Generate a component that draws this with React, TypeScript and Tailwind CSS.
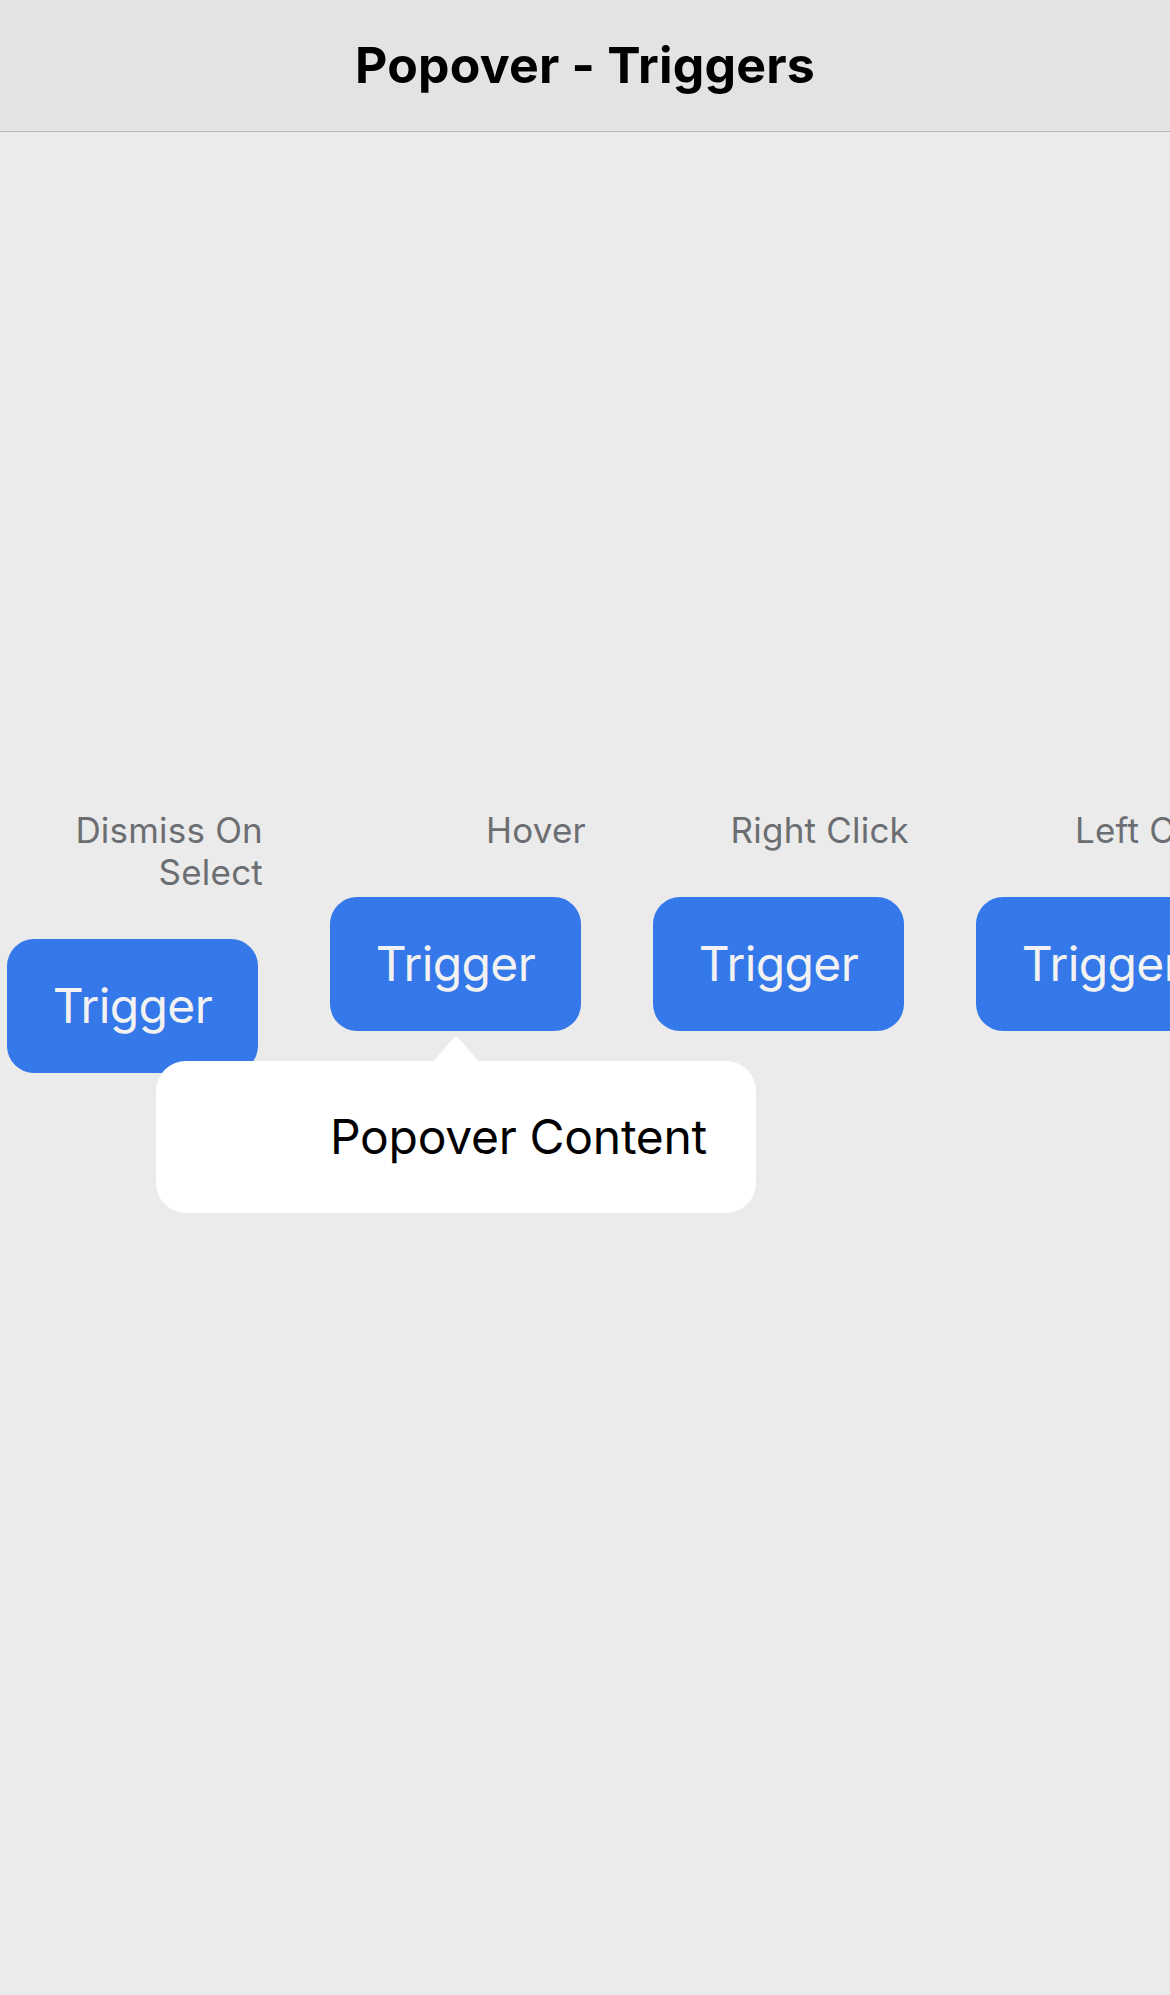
const columns = [
  { label: "Dismiss On Select" },
  { label: "Hover" },
  { label: "Right Click" },
  { label: "Left Click" },
];

function TriggerColumn({ label }: { label: string }) {
  return (
    <div className="flex w-[256px] flex-shrink-0 flex-col items-start">
      <p className="w-full text-right text-[35px] leading-[42px] tracking-[0.2px] text-[#6c6e72]">{label}</p>
      <button className="mt-[46px] flex h-[134px] w-[251px] items-center justify-center rounded-[27px] bg-[#3578e9] text-[48px] tracking-[-0.6px] text-[#f2f2f2]">
        Trigger
      </button>
    </div>
  );
}

export default function App() {
  return (
    <div className="relative min-h-[1995px] w-[1170px] overflow-hidden bg-[#ebebeb] font-['Inter',sans-serif]">
      <header className="flex h-[132px] items-center justify-center border-b border-[#b6b6b6] bg-[#e3e3e3]">
        <h1 className="text-[50px] font-bold tracking-[0.2px] text-black">Popover - Triggers</h1>
      </header>

      <div className="flex gap-[67px] pl-[7px] pt-[677px]">
        {columns.map((c) => (
          <TriggerColumn key={c.label} label={c.label} />
        ))}
      </div>

      {/* popover shown under the hover trigger */}
      <div className="absolute left-[156px] top-[1035px] w-[600px]">
        <svg width="52" height="27" viewBox="0 0 52 27" className="ml-[274px] block">
          <path d="M0 27 Q3 27 5 24.5 L23 3.5 Q26 0 29 3.5 L47 24.5 Q49 27 52 27 Z" fill="#ffffff" />
        </svg>
        <div className="-mt-px flex h-[152px] items-center justify-end rounded-[30px] bg-white pr-[49px]">
          <span className="text-[48px] tracking-[-0.3px] text-black">Popover Content</span>
        </div>
      </div>
    </div>
  );
}
